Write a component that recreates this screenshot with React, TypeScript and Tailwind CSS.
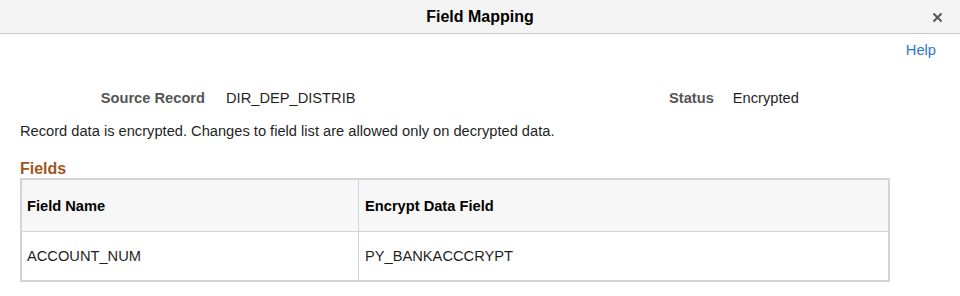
export default function App() {
  return (
    <div className="w-[960px] h-[296px] bg-white text-[14.67px] text-[#1f1f1f] font-['Liberation_Sans',Arial,sans-serif] overflow-hidden">
      {/* Title bar */}
      <div className="relative h-[34px] bg-[#f4f4f4] border-b border-[#c3c7ce] flex items-center justify-center">
        <span className="text-[16px] font-bold text-black">Field Mapping</span>
        <button aria-label="Close" className="absolute right-[17px] top-[12px] w-[11px] h-[11px]">
          <svg viewBox="0 0 11 11" className="w-[11px] h-[11px] block">
            <path d="M1.5 1.5 L9.5 9.5 M9.5 1.5 L1.5 9.5" stroke="#555" strokeWidth="2" />
          </svg>
        </button>
      </div>

      {/* Help link */}
      <div className="flex justify-end pr-[24px] mt-[8px] leading-[16px]">
        <a className="text-[#2d76cc]">Help</a>
      </div>

      {/* Source / Status */}
      <div className="flex mt-[32px] leading-[16px]">
        <div className="w-[205px] text-right font-bold text-[#555]">Source Record</div>
        <div className="w-[464px] pl-[21px]">DIR_DEP_DISTRIB</div>
        <div className="font-bold text-[#555]">Status</div>
        <div className="pl-[19px]">Encrypted</div>
      </div>

      {/* Message */}
      <div className="px-[20px] mt-[17px] leading-[16px]">
        Record data is encrypted. Changes to field list are allowed only on decrypted data.
      </div>

      {/* Fields grid */}
      <div className="px-[20px] mt-[21px]">
        <div className="text-[16px] font-bold text-[#a0561c] leading-[18px]">Fields</div>
        <div className="w-[870px] border-2 border-[#d1d5da]">
          <div className="flex h-[52px] bg-[#f7f7f7] border-b border-[#d1d5da] font-bold text-black">
            <div className="w-[337px] border-r border-[#d1d5da] flex items-center pl-[5px]">Field Name</div>
            <div className="flex-1 flex items-center pl-[6px]">Encrypt Data Field</div>
          </div>
          <div className="flex h-[48px]">
            <div className="w-[337px] border-r border-[#d1d5da] flex items-center pl-[5px]">ACCOUNT_NUM</div>
            <div className="flex-1 flex items-center pl-[6px]">PY_BANKACCCRYPT</div>
          </div>
        </div>
      </div>
    </div>
  );
}
